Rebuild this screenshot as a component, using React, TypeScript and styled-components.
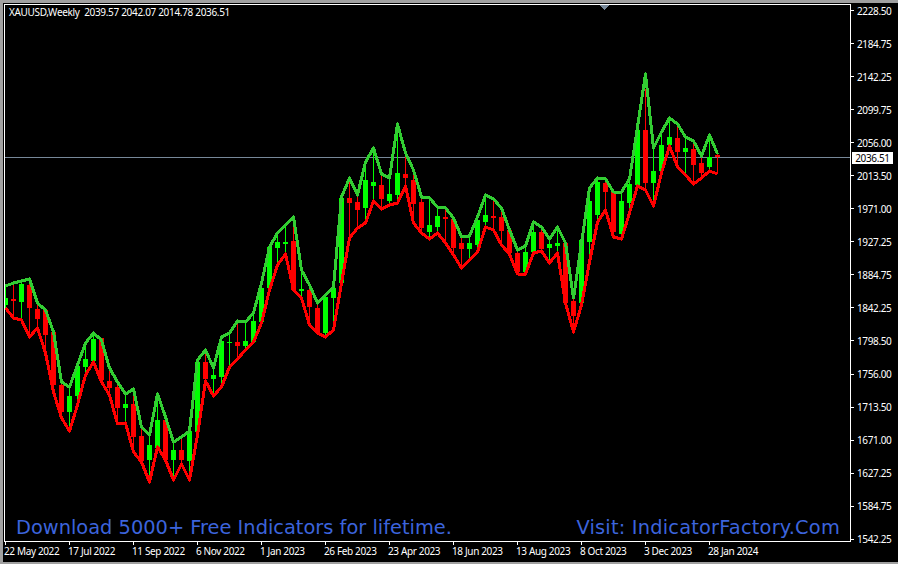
import React from 'react';
import styled, { createGlobalStyle } from 'styled-components';

const GlobalStyle = createGlobalStyle`
  html, body {
    margin: 0;
    padding: 0;
    background: #000;
  }
`;

const Terminal = styled.div`
  width: 898px;
  height: 564px;
  box-sizing: border-box;
  background: #000;
  border-top: 3px solid #a0a0a0;
  border-left: 3px solid #a0a0a0;
  border-bottom: 2px solid #a0a0a0;
  padding-top: 1px;
  padding-left: 1px;
  display: flex;
  flex-direction: column;
  overflow: hidden;
  font-family: 'Noto Sans', Tahoma, sans-serif;
  font-size: 10px;
  letter-spacing: -0.36px;
  color: #fff;
`;

const ChartRow = styled.div`
  display: flex;
  height: 538px;
`;

const Plot = styled.div`
  position: relative;
  width: 847px;
  height: 538px;
  box-sizing: border-box;
  border: 1px solid #fff;
  overflow: hidden;
`;

const ChartSvg = styled.svg`
  display: block;
  width: 845px;
  height: 536px;
`;

const Title = styled.div`
  position: absolute;
  left: 4px;
  top: 0;
  white-space: pre;
  line-height: 14px;
  letter-spacing: -0.32px;
`;

const Watermark = styled.div<{ $side: 'left' | 'right' }>`
  position: absolute;
  top: 511px;
  ${p => (p.$side === 'left' ? 'left: 11px;' : 'right: 10px;')}
  font-family: 'DejaVu Sans', Verdana, sans-serif;
  font-size: 19.4px;
  letter-spacing: ${p => (p.$side === 'left' ? '0' : '0.2px')};
  line-height: 24px;
  color: #3c64dc;
  white-space: pre;
`;

const PriceAxis = styled.div`
  position: relative;
  flex: 1;
  display: flex;
  flex-direction: column;
`;

const PriceTick = styled.div`
  flex: none;
  height: 33.06px;
  display: flex;
  align-items: center;
  gap: 3px;
  line-height: 12px;

  &:first-child {
    margin-top: -10px;
  }

  &::before {
    content: '';
    width: 3px;
    height: 1px;
    background: #fff;
  }
`;

const CurrentPrice = styled.div`
  position: absolute;
  top: 148px;
  left: 1px;
  width: 41px;
  height: 12px;
  background: #fff;
  color: #000;
  line-height: 12px;
  text-align: center;
`;

const TimeAxis = styled.div`
  display: flex;
`;

const TimeTick = styled.div`
  position: relative;
  width: 64px;
  height: 17px;
  padding-top: 3px;
  box-sizing: border-box;
  line-height: 12px;
  white-space: nowrap;

  &::before {
    content: '';
    position: absolute;
    left: 1px;
    top: 0;
    width: 1px;
    height: 3px;
    background: #fff;
  }
`;

// pixel values in page coordinates: [body top, body bottom, up?, green line, red line, wick top override]
type Bar = [number, number, number, number, number, number?];

const bars: Bar[] = [
  [298, 305, 1, 286, 308], [299, 301, 0, 283, 318], [284, 302, 1, 281, 320], [285, 308, 0, 279, 337],
  [309, 319, 0, 303, 328], [310, 335, 0, 310, 353], [332, 385, 0, 332, 392], [385, 412, 0, 382, 418],
  [396, 412, 1, 387, 431], [366, 396, 1, 365, 405], [359, 367, 1, 343, 375], [339, 361, 1, 333, 362],
  [338, 380, 0, 340, 382], [381, 388, 0, 368, 395], [387, 408, 0, 382, 424], [404, 408, 1, 394, 423],
  [404, 437, 0, 389, 452], [436, 461, 0, 427, 462], [445, 460, 1, 435, 482], [420, 448, 1, 394, 447],
  [420, 460, 0, 417, 460], [450, 460, 1, 442, 480], [450, 460, 0, 437, 464], [431, 461, 1, 431, 480],
  [362, 432, 1, 360, 435], [362, 379, 0, 350, 381], [375, 379, 1, 368, 396], [341, 377, 1, 337, 387],
  [342, 343, 1, 333, 367], [342, 346, 0, 321, 359], [341, 346, 1, 322, 350], [321, 342, 1, 313, 342],
  [288, 322, 1, 283, 323], [247, 288, 1, 247, 290], [242, 248, 1, 233, 265], [242, 244, 1, 225, 254],
  [241, 290, 0, 217, 290], [289, 291, 1, 270, 298], [290, 307, 0, 285, 325], [308, 332, 0, 303, 333],
  [297, 333, 1, 295, 337], [288, 298, 1, 287, 330], [198, 283, 1, 197, 283], [198, 203, 0, 178, 238],
  [202, 210, 0, 195, 228], [180, 208, 1, 162, 223], [182, 186, 1, 148, 201], [185, 199, 0, 174, 209],
  [194, 201, 1, 178, 205], [173, 195, 1, 124, 203], [174, 178, 0, 153, 186], [180, 204, 0, 170, 223],
  [202, 228, 0, 197, 233], [225, 232, 1, 198, 239], [216, 227, 1, 207, 233], [217, 219, 0, 208, 243],
  [219, 248, 0, 218, 255], [243, 249, 0, 237, 268], [243, 249, 1, 236, 260], [220, 245, 1, 217, 252],
  [215, 222, 1, 195, 227], [216, 218, 0, 199, 230], [217, 231, 0, 208, 245], [230, 253, 0, 230, 254],
  [253, 272, 0, 250, 274], [252, 272, 1, 246, 274], [232, 252, 1, 222, 253], [232, 249, 0, 227, 251],
  [244, 248, 1, 239, 263], [243, 246, 1, 227, 253], [243, 303, 0, 243, 303], [301, 316, 0, 298, 332],
  [240, 303, 1, 243, 305], [201, 242, 1, 188, 262], [182, 215, 1, 178, 222], [183, 192, 0, 179, 210],
  [192, 232, 0, 192, 237], [201, 234, 1, 192, 239], [184, 203, 1, 179, 213], [130, 185, 1, 127, 186],
  [130, 183, 0, 74, 190, 89], [171, 183, 1, 148, 206], [145, 171, 1, 132, 173], [137, 145, 1, 118, 146],
  [138, 152, 0, 124, 167], [148, 152, 1, 137, 175], [149, 165, 0, 141, 184], [163, 173, 0, 156, 178],
  [157, 167, 1, 135, 171], [155, 157, 0, 154, 174],
];

const prices = [
  '2228.50', '2184.75', '2142.25', '2099.75', '2056.00', '2013.50', '1971.00', '1927.25', '1884.75',
  '1842.25', '1798.50', '1756.00', '1713.50', '1671.00', '1627.25', '1584.75', '1542.25',
];

const dates = [
  '22 May 2022', '17 Jul 2022', '11 Sep 2022', '6 Nov 2022', '1 Jan 2023', '26 Feb 2023', '23 Apr 2023',
  '18 Jun 2023', '13 Aug 2023', '8 Oct 2023', '3 Dec 2023', '28 Jan 2024',
];

// svg origin sits on page (5, 5)
const OY = 5;
const barX = (i: number) => 8 * i;

const Chart = () => {
  const line = (k: 3 | 4) => bars.map((b, i) => `${barX(i) + 0.5},${(b[k] as number) - OY}`).join(' ');
  return (
    <ChartSvg viewBox="0 0 845 536" shapeRendering="crispEdges">
      {/* current price line */}
      <rect x="0" y={157 - OY} width="845" height="1" fill="#778899" />
      {/* chart shift marker */}
      <polygon points="594,0 604,0 599,5" fill="#778899" />
      {bars.map((b, i) => {
        const colour = b[2] ? '#00ff00' : '#ff0000';
        const wickTop = b[5] ?? b[3];
        return (
          <g key={i} fill={colour}>
            <rect x={barX(i)} y={wickTop - OY} width="1" height={b[4] - wickTop} />
            <rect x={barX(i) - 2} y={b[0] - OY} width="5" height={b[1] - b[0]} />
          </g>
        );
      })}
      <polyline points={line(3)} fill="none" stroke="#32cd32" strokeWidth="3" strokeLinejoin="round" />
      <polyline points={line(4)} fill="none" stroke="#ff0000" strokeWidth="3" strokeLinejoin="round" />
    </ChartSvg>
  );
};

export default function App() {
  return (
    <>
      <GlobalStyle />
      <Terminal>
        <ChartRow>
          <Plot>
            <Chart />
            <Title>XAUUSD,Weekly  2039.57 2042.07 2014.78 2036.51</Title>
            <Watermark $side="left">Download 5000+ Free Indicators for lifetime.</Watermark>
            <Watermark $side="right">Visit: IndicatorFactory.Com</Watermark>
          </Plot>
          <PriceAxis>
            {prices.map(p => (
              <PriceTick key={p}>{p}</PriceTick>
            ))}
            <CurrentPrice>2036.51</CurrentPrice>
          </PriceAxis>
        </ChartRow>
        <TimeAxis>
          {dates.map(d => (
            <TimeTick key={d}>{d}</TimeTick>
          ))}
        </TimeAxis>
      </Terminal>
    </>
  );
}
